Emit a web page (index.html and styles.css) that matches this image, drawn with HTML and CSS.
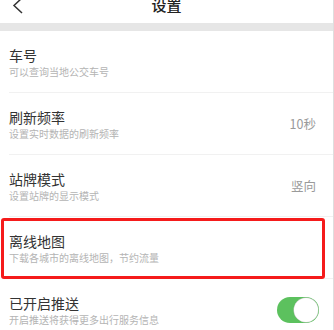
FILE: index.html
```html
<!DOCTYPE html>
<html lang="zh-CN">
<head>
  <meta charset="UTF-8">
  <meta name="viewport" content="width=device-width, initial-scale=1.0">
  <title>设置</title>
  <link rel="stylesheet" href="styles.css">
</head>
<body>
  <div class="page">
    <div class="nav-bar">
      <svg class="back" width="12" height="18" viewBox="0 0 12 18">
        <polyline points="10,1 2,8.5 10,16" fill="none" stroke="#333" stroke-width="1.5"/>
      </svg>
      <div class="nav-title">设置</div>
    </div>
    <div class="gap-band"></div>

    <div class="setting-list">
      <div class="setting-row">
        <div class="setting-text">
          <div class="setting-title">车号</div>
          <div class="setting-desc">可以查询当地公交车号</div>
        </div>
      </div>
      <div class="setting-row">
        <div class="setting-text">
          <div class="setting-title">刷新频率</div>
          <div class="setting-desc">设置实时数据的刷新频率</div>
        </div>
        <div class="setting-value">10秒</div>
      </div>
      <div class="setting-row">
        <div class="setting-text">
          <div class="setting-title">站牌模式</div>
          <div class="setting-desc">设置站牌的显示模式</div>
        </div>
        <div class="setting-value">竖向</div>
      </div>
      <div class="setting-row highlighted">
        <div class="setting-text">
          <div class="setting-title">离线地图</div>
          <div class="setting-desc">下载各城市的离线地图，节约流量</div>
        </div>
        <div class="highlight-box"></div>
      </div>
      <div class="setting-row">
        <div class="setting-text">
          <div class="setting-title">已开启推送</div>
          <div class="setting-desc">开启推送将获得更多出行服务信息</div>
        </div>
        <div class="switch on"><span class="knob"></span></div>
      </div>
    </div>
  </div>
</body>
</html>
```

FILE: styles.css
```css
/* General */
body {
  margin: 0;
  background: #fff;
  font-family: 'Noto Sans CJK SC', 'Noto Sans', sans-serif;
  color: #333;
  overflow: hidden;
}

.page {
  width: 333px;
  min-height: 100vh;
  border-right: 1px solid #dedede;
}

/* Nav bar (scrolled up, only the bottom part shows) */
.nav-bar {
  position: relative;
  height: 23px;
  display: flex;
  justify-content: center;
  align-items: flex-start;
}

.back {
  position: absolute;
  left: 12px;
  top: -3px;
}

.nav-title {
  font-size: 15px;
  font-weight: 500;
  line-height: 10px;
  color: #222;
}

.gap-band {
  height: 8px;
  background: #e6e6e6;
}

/* Settings list */
.setting-row {
  position: relative;
  height: 61px;
  margin-left: 9px;
  padding-right: 17px;
  border-bottom: 1px solid #f1f1f1;
  display: flex;
  align-items: center;
  justify-content: space-between;
}

.setting-title {
  font-size: 14px;
  line-height: 20px;
  color: #333;
}

.setting-desc {
  font-size: 10px;
  line-height: 14px;
  color: #b4b4b4;
}

.setting-value {
  font-size: 12.5px;
  color: #9a9a9a;
}

.highlight-box {
  position: absolute;
  left: -8px;
  right: 8px;
  top: 1px;
  bottom: -1px;
  border: 3px solid #f51b1b;
  border-radius: 3px;
}

/* Switch */
.switch {
  position: relative;
  width: 42px;
  height: 26px;
  border-radius: 13px;
  background: #5cc15e;
  margin-right: -3px;
}

.switch .knob {
  position: absolute;
  right: 1px;
  top: 1px;
  width: 24px;
  height: 24px;
  border-radius: 50%;
  background: #fff;
  box-shadow: 0 0 0 0.5px #c8c8c8;
}
```
